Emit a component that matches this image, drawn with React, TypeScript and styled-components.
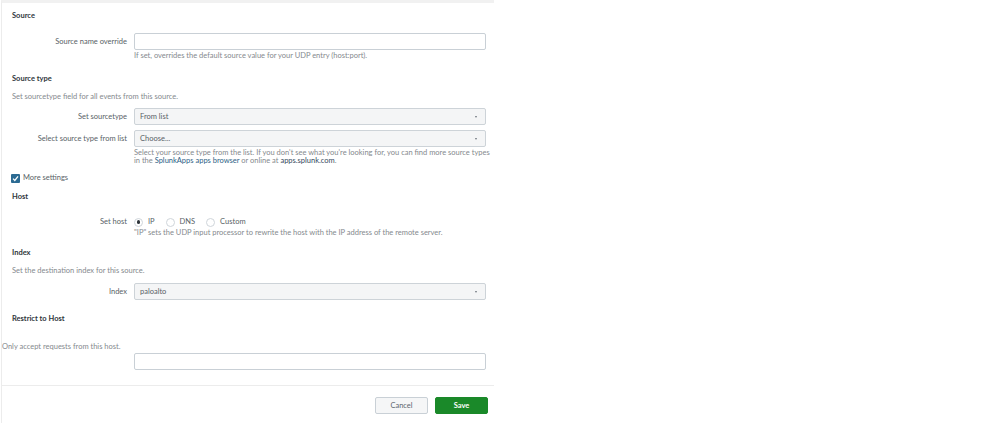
import React from "react";
import styled, { createGlobalStyle } from "styled-components";

const Global = createGlobalStyle`
  html, body { margin: 0; padding: 0; background: #ffffff; }
  body { font-family: Lato, "Liberation Sans", Arial, sans-serif; color: #3c444d; }
  * { box-sizing: border-box; }
`;

const Panel = styled.div`
  width: 493px;
  border-left: 1px solid #ececec;
  border-top: 3px solid #f1f1f1;
  margin-left: 1px;
  font-size: 7.5px;
  line-height: 10px;
  white-space: nowrap;
`;

const Heading = styled.div<{ $mt: number }>`
  margin-top: ${(p) => p.$mt}px;
  padding-left: 10px;
  font-weight: 700;
  color: #2f353b;
  height: 10px;
`;

const Desc = styled.div<{ $mt: number; $pl?: number }>`
  margin-top: ${(p) => p.$mt}px;
  padding-left: ${(p) => (p.$pl ?? 10)}px;
  color: #85898e;
  height: 10px;
`;

const Row = styled.div<{ $mt: number; $h?: number }>`
  margin-top: ${(p) => p.$mt}px;
  display: grid;
  grid-template-columns: 132px 352px;
  align-items: center;
  min-height: ${(p) => p.$h ?? 17}px;
`;

const Label = styled.div`
  text-align: right;
  padding-right: 7px;
  color: #585f66;
`;

const TextInput = styled.div`
  height: 17px;
  border: 1px solid #c9d0d6;
  border-radius: 2px;
  background: #fff;
`;

const Select = styled.div`
  height: 17px;
  border: 1px solid #cdd3d8;
  border-radius: 2px;
  background: #f4f5f6;
  display: flex;
  align-items: center;
  justify-content: space-between;
  padding: 0 8px 0 5px;
  color: #585f66;
`;

const Caret = styled.span`
  width: 0;
  height: 0;
  border-left: 1.5px solid transparent;
  border-right: 1.5px solid transparent;
  border-top: 2px solid #6b737b;
`;

const Help = styled.div<{ $mt: number; $lh?: number }>`
  margin-top: ${(p) => p.$mt}px;
  padding-left: 132px;
  color: #85898e;
  line-height: ${(p) => p.$lh ?? 10}px;
`;

const Link = styled.span`
  color: #2d5f86;
`;

const Dark = styled.span`
  color: #34495c;
`;

const CheckRow = styled.div<{ $mt: number }>`
  margin-top: ${(p) => p.$mt}px;
  padding-left: 9px;
  display: flex;
  align-items: center;
  gap: 3px;
  height: 10px;
  color: #585f66;
`;

const CheckBox = styled.span`
  width: 9px;
  height: 9px;
  background: #2b6a92;
  border-radius: 1px;
  display: inline-flex;
  align-items: center;
  justify-content: center;
`;

const Radios = styled.div`
  display: flex;
  align-items: center;
  gap: 11px;
`;

const RadioItem = styled.label`
  display: flex;
  align-items: center;
  gap: 5px;
  color: #585f66;
`;

const Radio = styled.span<{ $on?: boolean }>`
  width: 9px;
  height: 9px;
  border-radius: 50%;
  border: 1px solid #cfd5da;
  background: #fff;
  display: inline-flex;
  align-items: center;
  justify-content: center;
  &::after {
    content: "";
    width: 3.5px;
    height: 3.5px;
    border-radius: 50%;
    background: ${(p) => (p.$on ? "#2f353b" : "transparent")};
  }
`;

const Divider = styled.div<{ $mt: number }>`
  margin-top: ${(p) => p.$mt}px;
  height: 1px;
  background: #ececec;
  margin-left: -1px;
`;

const Footer = styled.div`
  margin-top: 11px;
  display: flex;
  justify-content: flex-end;
  gap: 7px;
  padding-right: 6px;
  padding-bottom: 9px;
`;

const Button = styled.button<{ $primary?: boolean }>`
  height: 17px;
  width: 53px;
  border-radius: 2px;
  font-family: inherit;
  font-size: 7.5px;
  padding: 0;
  cursor: pointer;
  border: 1px solid ${(p) => (p.$primary ? "#1a8929" : "#c9d0d6")};
  background: ${(p) => (p.$primary ? "#1a8929" : "#f5f6f7")};
  color: ${(p) => (p.$primary ? "#ffffff" : "#5c6670")};
  font-weight: ${(p) => (p.$primary ? 700 : 400)};
`;

export default function App() {
  return (
    <>
      <Global />
      <Panel>
        <Heading $mt={8}>Source</Heading>
        <Row $mt={12}>
          <Label>Source name override</Label>
          <TextInput />
        </Row>
        <Help $mt={1}>If set, overrides the default source value for your UDP entry (host:port).</Help>

        <Heading $mt={13}>Source type</Heading>
        <Desc $mt={8}>Set sourcetype field for all events from this source.</Desc>
        <Row $mt={6}>
          <Label>Set sourcetype</Label>
          <Select>
            <span>From list</span>
            <Caret />
          </Select>
        </Row>
        <Row $mt={5}>
          <Label>Select source type from list</Label>
          <Select>
            <span>Choose...</span>
            <Caret />
          </Select>
        </Row>
        <Help $mt={2} $lh={8}>
          Select your source type from the list. If you don't see what you're looking for, you can find more source types
          <br />
          in the <Link>SplunkApps apps browser</Link> or online at <Dark>apps.splunk.com</Dark>.
        </Help>

        <CheckRow $mt={8}>
          <CheckBox>
            <svg width="7" height="7" viewBox="0 0 10 10">
              <path d="M1.5 5.2 L4 7.8 L8.6 2" fill="none" stroke="#ffffff" strokeWidth="1.8" />
            </svg>
          </CheckBox>
          <span>More settings</span>
        </CheckRow>

        <Heading $mt={9}>Host</Heading>
        <Row $mt={15} $h={10}>
          <Label>Set host</Label>
          <Radios>
            <RadioItem>
              <Radio $on />
              IP
            </RadioItem>
            <RadioItem>
              <Radio />
              DNS
            </RadioItem>
            <RadioItem>
              <Radio />
              Custom
            </RadioItem>
          </Radios>
        </Row>
        <Help $mt={1}>"IP" sets the UDP input processor to rewrite the host with the IP address of the remote server.</Help>

        <Heading $mt={10}>Index</Heading>
        <Desc $mt={8}>Set the destination index for this source.</Desc>
        <Row $mt={7}>
          <Label>Index</Label>
          <Select>
            <span>paloalto</span>
            <Caret />
          </Select>
        </Row>

        <Heading $mt={14}>Restrict to Host</Heading>
        <Desc $mt={18} $pl={0}>Only accept requests from this host.</Desc>
        <Row $mt={1}>
          <span />
          <TextInput />
        </Row>

        <Divider $mt={15} />
        <Footer>
          <Button>Cancel</Button>
          <Button $primary>Save</Button>
        </Footer>
      </Panel>
    </>
  );
}
